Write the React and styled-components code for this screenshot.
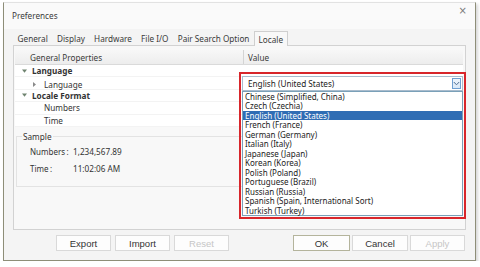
import React from "react";
import styled, { createGlobalStyle } from "styled-components";

const GlobalStyle = createGlobalStyle`
  html, body { margin: 0; padding: 0; background: #ffffff; }
  body {
    font-family: "Noto Sans", "Open Sans", sans-serif;
    font-size: 8.2px;
    color: #333333;
  }
  * { box-sizing: border-box; }
`;

const Dialog = styled.div`
  margin: 2px 0 0 3px;
  width: 473px;
  height: 259px;
  border: 1px solid #8e8e78;
  border-top-color: #e2e2e2;
  background: #f4f4f4;
  display: flex;
  flex-direction: column;
  box-shadow: 2px 2px 3px rgba(0, 0, 0, 0.16);
`;

const TitleBar = styled.div`
  height: 26px;
  flex: none;
  display: flex;
  align-items: center;
  justify-content: space-between;
  padding: 0 8px 0 8px;
  background: #fafafa;
`;

const Title = styled.span`
  line-height: 10px;
  color: #3a3a3a;
`;

const Close = styled.span`
  align-self: flex-start;
  margin-top: 2px;
  font-family: "DejaVu Sans", sans-serif;
  font-size: 10px;
  line-height: 12px;
  color: #7a7a7a;
`;

const TabStrip = styled.div`
  height: 16px;
  flex: none;
  display: flex;
  align-items: flex-end;
  padding-left: 9px;
  position: relative;
  z-index: 1;
`;

const Tab = styled.div`
  height: ${(p) => (p.$active ? 15 : 14)}px;
  margin-bottom: ${(p) => (p.$active ? "-1px" : "0")};
  padding: 0 ${(p) => (p.$active ? 3.5 : 3.6)}px;
  display: flex;
  align-items: center;
  border: 1px solid ${(p) => (p.$active ? "#cfcfcf" : "transparent")};
  border-bottom: none;
  background: ${(p) => (p.$active ? "#f8f8f8" : "transparent")};
  color: #3a3a3a;
  white-space: nowrap;
`;

const Panel = styled.div`
  margin: 0 9px;
  height: 185px;
  flex: none;
  border: 1px solid #d2d2d2;
  background: #f8f8f8;
  padding: 4px 2px 0 1px;
  display: flex;
  flex-direction: column;
`;

const Grid = styled.div`
  background: #ffffff;
  flex: none;
`;

const HeaderRow = styled.div`
  display: grid;
  grid-template-columns: 228px 1fr;
  height: 15px;
  background: linear-gradient(#f7f7f7, #ededed);
  border-bottom: 1px solid #dadada;
`;

const HeaderCell = styled.div`
  display: flex;
  align-items: center;
  padding-left: ${(p) => (p.$value ? 4 : 15)}px;
  border-left: ${(p) => (p.$value ? "1px solid #d4d4d4" : "none")};
  color: #3a3a3a;
`;

const Row = styled.div`
  display: grid;
  grid-template-columns: 228px 1fr;
  height: 12.4px;
  border-bottom: 1px solid #f3f3f3;
`;

const NameCell = styled.div`
  display: flex;
  align-items: center;
  padding-left: ${(p) => [7, 18, 29][p.$level]}px;
  font-weight: ${(p) => (p.$category ? 700 : 400)};
  color: #333;
  white-space: nowrap;
`;

const Expander = styled.span`
  display: inline-flex;
  align-items: center;
  width: ${(p) => p.$w}px;
  flex: none;
`;

const ValueCell = styled.div`
  position: relative;
`;

const ComboWrap = styled.div`
  position: relative;
  margin: -1.5px 0 0 -1px;
  z-index: 2;
`;

const Combo = styled.div`
  height: 15px;
  border: 1px solid #a9bccd;
  background: #ffffff;
  display: flex;
  align-items: center;
  padding-left: 5px;
  color: #222;
  white-space: nowrap;
`;

const ComboButton = styled.span`
  margin-left: auto;
  margin-right: 1px;
  width: 9px;
  height: 11px;
  border: 1px solid #6f9fd2;
  background: linear-gradient(#eef5fc, #d8e7f7);
  display: flex;
  align-items: center;
  justify-content: center;
`;

const DropList = styled.div`
  position: absolute;
  top: 15px;
  left: 0;
  right: 0;
  border: 1px solid #7aa0b8;
  background: #ffffff;
`;

const Item = styled.div`
  height: 9.5px;
  line-height: 9.5px;
  padding-left: 2px;
  font-size: 8px;
  white-space: nowrap;
  color: ${(p) => (p.$selected ? "#ffffff" : "#222")};
  background: ${(p) => (p.$selected ? "#2f6db4" : "transparent")};
`;

const RedFrame = styled.div`
  position: absolute;
  top: -4px;
  left: -3px;
  right: -3px;
  height: 147px;
  border: 2px solid #d8262b;
  pointer-events: none;
`;

const Group = styled.fieldset`
  margin: 5px 0 0 1px;
  min-width: 0;
  height: 55px;
  padding: 0 0 0 5px;
  border: 1px solid #e3e3e3;
  flex: none;
`;

const Legend = styled.legend`
  padding: 0 1px;
  line-height: 10px;
  color: #333;
`;

const SampleRows = styled.div`
  padding: 1px 0 0 8px;
`;

const SampleRow = styled.div`
  display: grid;
  grid-template-columns: 43px auto;
  height: 17px;
  align-items: center;
  color: #333;
  white-space: nowrap;
`;

const SampleLabel = styled.span`
  font-size: 8px;
  word-spacing: -0.7px;
`;

const ButtonBar = styled.div`
  flex: 1;
  display: flex;
  align-items: flex-start;
  padding: 5px 10px 0 52px;
`;

const ButtonGroup = styled.div`
  display: flex;
  gap: ${(p) => p.$gap}px;
  margin-left: ${(p) => (p.$right ? "auto" : "0")};
`;

const Button = styled.button`
  width: ${(p) => p.$w || 55}px;
  height: 16px;
  padding: 0;
  border: 1px solid ${(p) => (p.$default ? "#b4b49c" : "#d9d9d9")};
  background: #fdfdfd;
  font-family: "Liberation Sans", Arial, sans-serif;
  font-size: 9.5px;
  color: ${(p) => (p.disabled ? "#c6c6c6" : "#333")};
`;

const DownTri = () => (
  <svg width="5" height="4" viewBox="0 0 5 4">
    <path d="M0 0.5 L5 0.5 L2.5 3.8 Z" fill="#6f8470" />
  </svg>
);

const RightTri = () => (
  <svg width="3" height="5" viewBox="0 0 3 5">
    <path d="M0 0 L3 2.5 L0 5 Z" fill="#8a8a8a" />
  </svg>
);

const Chevron = () => (
  <svg width="7" height="5" viewBox="0 0 7 5">
    <path d="M0.8 1 L3.5 3.8 L6.2 1" fill="none" stroke="#4f6e92" strokeWidth="1" />
  </svg>
);

const tabs = ["General", "Display", "Hardware", "File I/O", "Pair Search Option", "Locale"];

const locales = [
  "Chinese (Simplified, China)",
  "Czech (Czechia)",
  "English (United States)",
  "French (France)",
  "German (Germany)",
  "Italian (Italy)",
  "Japanese (Japan)",
  "Korean (Korea)",
  "Polish (Poland)",
  "Portuguese (Brazil)",
  "Russian (Russia)",
  "Spanish (Spain, International Sort)",
  "Turkish (Turkey)",
];

export default function App() {
  return (
    <>
      <GlobalStyle />
      <Dialog>
        <TitleBar>
          <Title>Preferences</Title>
          <Close>×</Close>
        </TitleBar>
        <TabStrip>
          {tabs.map((t) => (
            <Tab key={t} $active={t === "Locale"}>
              {t}
            </Tab>
          ))}
        </TabStrip>
        <Panel>
          <Grid>
            <HeaderRow>
              <HeaderCell>General Properties</HeaderCell>
              <HeaderCell $value>Value</HeaderCell>
            </HeaderRow>
            <Row>
              <NameCell $level={0} $category>
                <Expander $w={10}><DownTri /></Expander>
                Language
              </NameCell>
              <ValueCell />
            </Row>
            <Row>
              <NameCell $level={1}>
                <Expander $w={11}><RightTri /></Expander>
                Language
              </NameCell>
              <ValueCell>
                <ComboWrap>
                  <Combo>
                    English (United States)
                    <ComboButton><Chevron /></ComboButton>
                  </Combo>
                  <DropList>
                    {locales.map((l) => (
                      <Item key={l} $selected={l === "English (United States)"}>
                        {l}
                      </Item>
                    ))}
                  </DropList>
                  <RedFrame />
                </ComboWrap>
              </ValueCell>
            </Row>
            <Row>
              <NameCell $level={0} $category>
                <Expander $w={10}><DownTri /></Expander>
                Locale Format
              </NameCell>
              <ValueCell />
            </Row>
            <Row>
              <NameCell $level={2}>Numbers</NameCell>
              <ValueCell />
            </Row>
            <Row>
              <NameCell $level={2}>Time</NameCell>
              <ValueCell />
            </Row>
          </Grid>
          <Group>
            <Legend>Sample</Legend>
            <SampleRows>
              <SampleRow>
                <SampleLabel>Numbers :</SampleLabel>
                <span>1,234,567.89</span>
              </SampleRow>
              <SampleRow>
                <SampleLabel>Time :</SampleLabel>
                <span>11:02:06 AM</span>
              </SampleRow>
            </SampleRows>
          </Group>
        </Panel>
        <ButtonBar>
          <ButtonGroup $gap={4}>
            <Button>Export</Button>
            <Button>Import</Button>
            <Button disabled>Reset</Button>
          </ButtonGroup>
          <ButtonGroup $right $gap={2}>
            <Button $w={57} $default>OK</Button>
            <Button $w={56}>Cancel</Button>
            <Button $w={55} disabled>Apply</Button>
          </ButtonGroup>
        </ButtonBar>
      </Dialog>
    </>
  );
}
